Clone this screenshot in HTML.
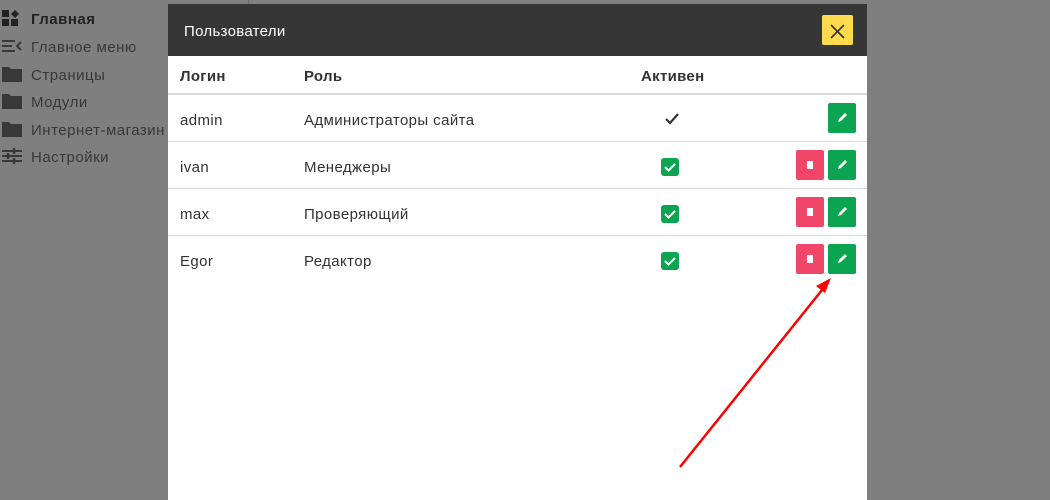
<!DOCTYPE html>
<html><head><meta charset="utf-8"><style>
body{margin:0;width:1050px;height:500px;background:#7f7f7f;font-family:"Liberation Sans",sans-serif;position:relative;overflow:hidden}
.sbline{position:absolute;left:248px;top:0;width:1px;height:8px;background:#6a6a6a}
.it{position:absolute;left:31px;font-size:15px;letter-spacing:0.5px;color:#383838;}
.ic{position:absolute;left:2px;width:20px;height:16px}
.modal{position:absolute;left:168px;top:4px;width:699px;height:496px;background:#fff}
.hd{height:52px;background:#363636;color:#fff;font-size:15px;line-height:56px;padding-left:16px;position:relative;letter-spacing:0.3px}
.x{position:absolute;right:14px;top:11px;width:31px;height:30px;background:#ffdb4d;border-radius:2px}
.th{position:absolute;top:64px;font-weight:bold;font-size:15px;color:#333;letter-spacing:0.3px}
.row{position:absolute;left:0;width:699px;height:47px;border-top:1px solid #dbdbdb}
.c{position:absolute;font-size:15px;color:#333;top:17px;letter-spacing:0.4px}
.cb{position:absolute;left:493px;top:16px;width:18px;height:18px;background:#0ba552;border-radius:3px}
.e,.d{position:absolute;top:8px;width:28px;height:30px;border-radius:2px}
.e{left:660px;background:#0ba552}.d{left:628px;background:#f1466a}
</style></head><body>
<div class="sbline"></div>
<svg class="ic" style="top:10px" viewBox="0 0 20 16"><rect x="0" y="0" width="7" height="7" fill="#222"/><rect x="0" y="9" width="7" height="7" fill="#222"/><rect x="9" y="9" width="7" height="7" fill="#222"/><path d="M13 0l4 4-4 4-4-4z" fill="#222"/></svg>
<div class="it" style="top:11px;font-weight:bold;color:#222">Главная</div>
<svg class="ic" style="top:38px" viewBox="0 0 20 16"><path d="M0 3h13M0 8h10M0 13h13M19 4l-4 4 4 4" stroke="#383838" stroke-width="2" fill="none"/></svg>
<div class="it" style="top:39px">Главное меню</div>
<svg class="ic" style="top:66px" viewBox="0 0 20 16"><path d="M0 1h7l2 2h11v13H0z" fill="#383838"/></svg>
<div class="it" style="top:67px">Страницы</div>
<svg class="ic" style="top:93px" viewBox="0 0 20 16"><path d="M0 1h7l2 2h11v13H0z" fill="#383838"/></svg>
<div class="it" style="top:94px">Модули</div>
<svg class="ic" style="top:121px" viewBox="0 0 20 16"><path d="M0 1h7l2 2h11v13H0z" fill="#383838"/></svg>
<div class="it" style="top:122px">Интернет-магазин</div>
<svg class="ic" style="top:148px" viewBox="0 0 20 16"><path d="M0 3h20M0 8h20M0 13h20" stroke="#383838" stroke-width="2"/><path d="M12 0v6M6 5v6M12 10v6" stroke="#383838" stroke-width="2.5"/></svg>
<div class="it" style="top:149px">Настройки</div>

<div class="modal">
<div class="hd">Пользователи<div class="x"><svg width="31" height="30"><path d="M9 8l13 13M22 8L9 21" stroke="#333" stroke-width="1.6"/></svg></div></div>
<div class="th" style="left:12px">Логин</div>
<div class="th" style="left:136px">Роль</div>
<div class="th" style="left:473px">Активен</div>
<div style="position:absolute;top:89px;left:0;width:699px;height:2px;background:#dbdbdb"></div>
<div class="row" style="top:91px;border-top:none"><div class="c" style="left:12px">admin</div><div class="c" style="left:136px">Администраторы сайта</div>
<svg style="position:absolute;left:497px;top:18px" width="14" height="12"><path d="M1 6l4 4 8-9" stroke="#333" stroke-width="2.2" fill="none"/></svg>
<div class="e"><svg width="28" height="30"><path d="M10 19l1-3 6-6 2 2-6 6z" fill="#fff"/></svg></div></div>
<div class="row" style="top:137px"><div class="c" style="left:12px">ivan</div><div class="c" style="left:136px">Менеджеры</div><div class="cb"><svg width="18" height="18"><path d="M4 9l3.5 3.5L14 6" stroke="#fff" stroke-width="2" fill="none"/></svg></div>
<div class="d"><div style="position:absolute;left:11px;top:11px;width:6px;height:8px;background:#fff"></div></div><div class="e"><svg width="28" height="30"><path d="M10 19l1-3 6-6 2 2-6 6z" fill="#fff"/></svg></div></div>
<div class="row" style="top:184px"><div class="c" style="left:12px">max</div><div class="c" style="left:136px">Проверяющий</div><div class="cb"><svg width="18" height="18"><path d="M4 9l3.5 3.5L14 6" stroke="#fff" stroke-width="2" fill="none"/></svg></div>
<div class="d"><div style="position:absolute;left:11px;top:11px;width:6px;height:8px;background:#fff"></div></div><div class="e"><svg width="28" height="30"><path d="M10 19l1-3 6-6 2 2-6 6z" fill="#fff"/></svg></div></div>
<div class="row" style="top:231px"><div class="c" style="left:12px">Egor</div><div class="c" style="left:136px">Редактор</div><div class="cb"><svg width="18" height="18"><path d="M4 9l3.5 3.5L14 6" stroke="#fff" stroke-width="2" fill="none"/></svg></div>
<div class="d"><div style="position:absolute;left:11px;top:11px;width:6px;height:8px;background:#fff"></div></div><div class="e"><svg width="28" height="30"><path d="M10 19l1-3 6-6 2 2-6 6z" fill="#fff"/></svg></div></div>
</div>
<svg style="position:absolute;left:0;top:0" width="1050" height="500"><path d="M680 467L822 290" stroke="#f00" stroke-width="2.5"/><path d="M831 278l-15 8 9 7z" fill="#f00"/></svg>
</body></html>
